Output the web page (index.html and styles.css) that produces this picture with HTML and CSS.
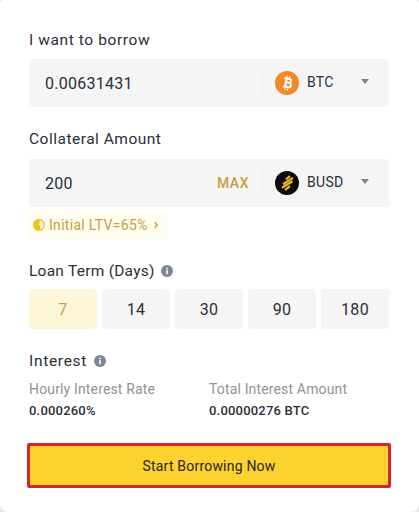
FILE: index.html
```html
<!DOCTYPE html>
<html lang="en">
<head>
  <meta charset="UTF-8">
  <title>Crypto Loans</title>
  <link rel="stylesheet" href="styles.css">
</head>
<body>
  <div class="card">
    <div class="label borrow-label">I want to borrow</div>
    <div class="field">
      <div class="amount">0.00631431</div>
      <div class="coin">
        <svg class="coin-icon" viewBox="0 0 24 24">
          <circle cx="12" cy="12" r="12" fill="#f0892a"/>
          <g transform="rotate(10 12 12)">
            <path d="M8.500 6.500h5.200c2 0 3.100 1 3.100 2.500 0 1.100-.6 1.900-1.600 2.300 1.300.3 2.100 1.200 2.100 2.500 0 1.900-1.400 3.200-3.500 3.200H8.500v-1.700h1.200V8.200H8.500z M11.900 8.400v2.200h1.500c.8 0 1.200-.4 1.200-1.100s-.4-1.100-1.200-1.100z M11.900 12.300v2.800h1.900c.9 0 1.400-.5 1.400-1.400s-.5-1.400-1.400-1.400z" fill="#fff" fill-rule="evenodd"/>
            <path d="M10.500 4.800h1.300v1.700h-1.300z M13 4.800h1.300v1.700H13z M10.500 17.500h1.300v1.700h-1.300z M13 17.500h1.300v1.700H13z" fill="#fff"/>
          </g>
        </svg>
        <span class="coin-name">BTC</span>
        <span class="caret"></span>
      </div>
    </div>

    <div class="label collateral-label">Collateral Amount</div>
    <div class="field">
      <div class="amount">200</div>
      <div class="max">MAX</div>
      <div class="coin">
        <svg class="coin-icon" viewBox="0 0 24 24">
          <circle cx="12" cy="12" r="12" fill="#0e0c08"/>
          <g stroke="#e8b82e" stroke-width="2.200" fill="none">
            <path d="M11 8.300L15 5.100"/>
            <path d="M8 13.200L18 6.900"/>
            <path d="M7 16.800L17.500 10.200"/>
            <path d="M10 18.800L15 15.200"/>
          </g>
        </svg>
        <span class="coin-name">BUSD</span>
        <span class="caret"></span>
      </div>
    </div>
    <div class="ltv-row">
      <div class="ltv">
        <svg class="ltv-icon" viewBox="0 0 12 12">
          <circle cx="6" cy="6" r="6" fill="#f0c419"/>
          <path d="M6.500 1.600a4.400 4.400 0 0 1 3.500 6.300 4.500 4.500 0 0 1-3.500 2.500c1-1 1.200-2.600.3-3.800L5.400 5.400c1.300-.7 1.800-2.400 1.100-3.800z" fill="#fffdf0"/>
        </svg>
        <span>Initial LTV=65%</span>
        <svg class="ltv-arrow" viewBox="0 0 6 8"><path d="M1.500 1.200l2.800 2.800-2.800 2.800" fill="none" stroke="#c99400" stroke-width="1.200"/></svg>
      </div>
    </div>

    <div class="label term-label">Loan Term (Days) <svg class="info" viewBox="0 0 12 12"><circle cx="6" cy="6" r="6" fill="#7d8598"/><rect x="5.200" y="5" width="1.600" height="4.200" fill="#fff"/><rect x="5.200" y="2.700" width="1.600" height="1.500" fill="#fff"/></svg></div>
    <div class="terms">
      <div class="term active">7</div>
      <div class="term">14</div>
      <div class="term">30</div>
      <div class="term">90</div>
      <div class="term">180</div>
    </div>

    <div class="label interest-label">Interest <svg class="info" viewBox="0 0 12 12"><circle cx="6" cy="6" r="6" fill="#7d8598"/><rect x="5.200" y="5" width="1.600" height="4.200" fill="#fff"/><rect x="5.200" y="2.700" width="1.600" height="1.500" fill="#fff"/></svg></div>
    <div class="rates">
      <div class="rate">
        <div class="rate-title">Hourly Interest Rate</div>
        <div class="rate-value">0.000260%</div>
      </div>
      <div class="rate">
        <div class="rate-title">Total Interest Amount</div>
        <div class="rate-value">0.00000276 BTC</div>
      </div>
    </div>

    <button class="start">Start Borrowing Now</button>
  </div>
</body>
</html>
```

FILE: styles.css
```css
* {
  box-sizing: border-box;
}

body {
  margin: 0;
  height: 512px;
  overflow: hidden;
  background-color: #e6e6e6;
  font-family: Roboto, sans-serif;
  color: #2b2f36;
}

.card {
  height: 512px;
  padding: 30px 30px 0 29px;
  background-color: #fff;
  border-radius: 4px 4px 8px 8px;
}

.label {
  display: flex;
  align-items: center;
  gap: 6px;
  height: 20px;
  font-size: 15.500px;
  line-height: 20px;
  letter-spacing: 0.35px;
  margin-top: 22px;
  margin-bottom: 10px;
}

.borrow-label {
  margin-top: 0;
  margin-bottom: 9px;
  letter-spacing: 0.6px;
}

.collateral-label {
  letter-spacing: 0.5px;
}

.field {
  display: flex;
  align-items: center;
  height: 48px;
  padding-left: 16px;
  background-color: #f5f5f5;
  border-radius: 4px;
}

.amount {
  flex: 1;
  font-size: 16px;
  letter-spacing: 0.25px;
  padding-top: 1px;
}

.max {
  margin-right: 13px;
  font-size: 14px;
  font-weight: 500;
  letter-spacing: 0.5px;
  color: #c99e3e;
}

.coin {
  display: flex;
  align-items: center;
  width: 127px;
  height: 26px;
  padding-left: 12px;
  border-left: 1px solid #eeeeee;
}

.coin-icon {
  width: 24px;
  height: 24px;
  flex: none;
}

.coin-name {
  flex: 1;
  margin-left: 8px;
  font-size: 14px;
  letter-spacing: 0.3px;
  padding-bottom: 2px;
}

.caret {
  margin-right: 20px;
  margin-bottom: 3px;
  border-left: 4px solid transparent;
  border-right: 4px solid transparent;
  border-top: 5px solid #7d8598;
}

.ltv-row {
  display: flex;
  margin-top: 4px;
}

.ltv {
  display: flex;
  align-items: center;
  width: 139px;
  height: 28px;
  padding-left: 4px;
  background-color: #fffdf0;
  border-radius: 4px;
  font-size: 14px;
  letter-spacing: 0.3px;
  color: #c99e3e;
}

.ltv-icon {
  width: 12px;
  height: 12px;
  margin-right: 4px;
}

.ltv-arrow {
  width: 6px;
  height: 8px;
  margin-left: 5px;
}

.term-label {
  margin-top: 22px;
  margin-bottom: 8px;
  letter-spacing: 0.25px;
}

.info {
  width: 12px;
  height: 12px;
}

.terms {
  display: flex;
  gap: 5px;
}

.term {
  flex: 1;
  height: 40px;
  line-height: 41px;
  text-align: center;
  background-color: #f5f5f5;
  border-radius: 4px;
  font-size: 16px;
  letter-spacing: 0.3px;
}

.term.active {
  background-color: #fef6d8;
  color: #c99e3e;
}

.interest-label {
  gap: 7px;
  margin-top: 22px;
  margin-bottom: 8px;
  letter-spacing: 0.7px;
}

.rates {
  display: flex;
}

.rate {
  width: 180px;
}

.rate-title {
  font-size: 14px;
  line-height: 20px;
  letter-spacing: 0.15px;
  color: #929292;
}

.rate-value {
  margin-top: 2px;
  font-size: 13px;
  line-height: 20px;
  font-weight: 500;
  letter-spacing: 0.2px;
}

.start {
  display: block;
  width: 364px;
  height: 45px;
  margin-top: 22px;
  margin-left: -2px;
  background-color: #fcd22f;
  border: 3px solid #d9232e;
  border-radius: 2px;
  font-family: inherit;
  font-size: 14px;
  letter-spacing: 0.2px;
  color: #2b2410;
}
```
